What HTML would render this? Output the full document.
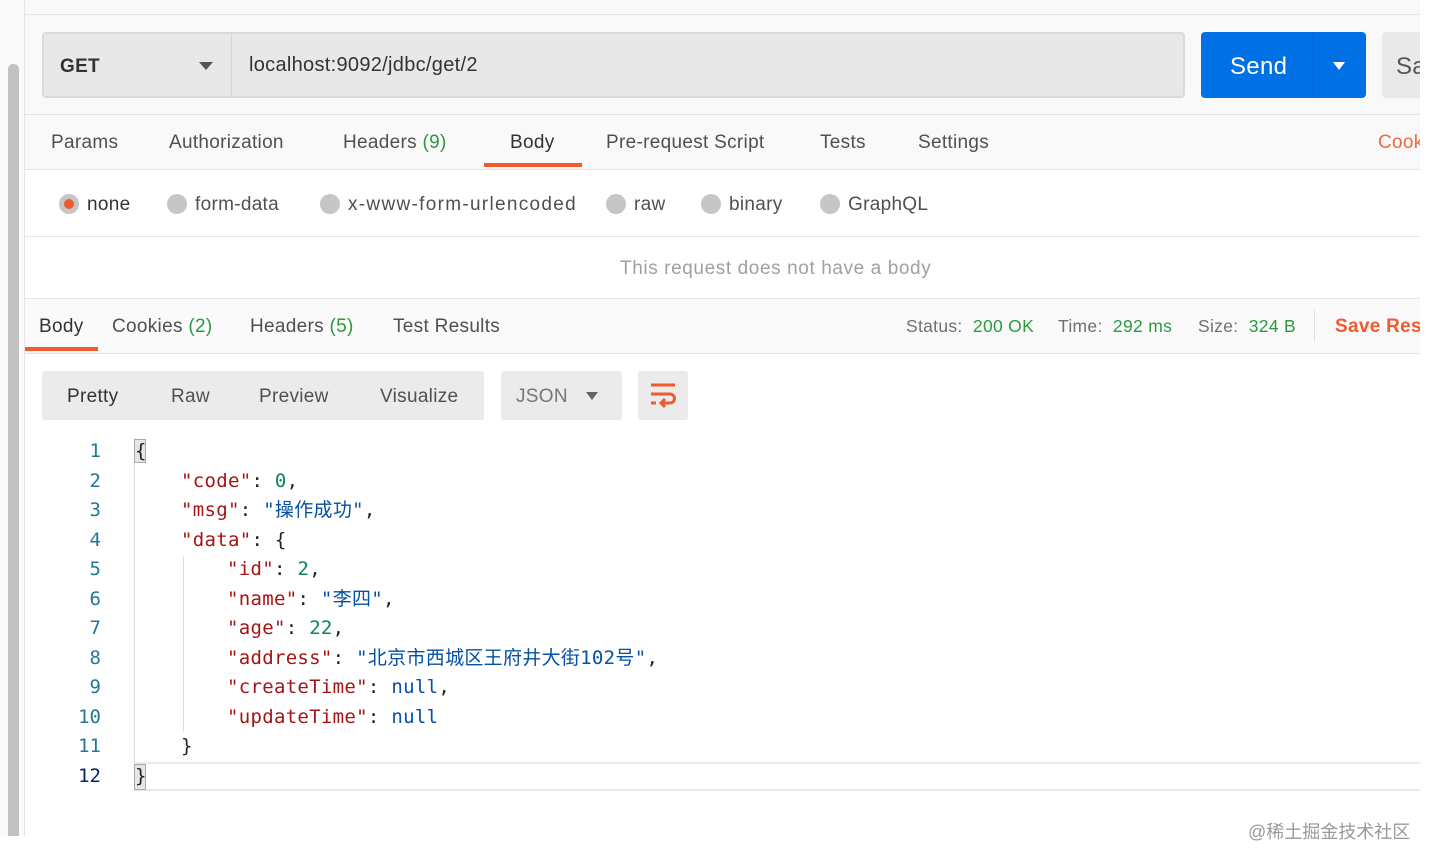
<!DOCTYPE html>
<html><head><meta charset="utf-8"><style>
*{margin:0;padding:0;box-sizing:border-box}
body{width:1432px;height:866px;background:#fff;position:relative;overflow:hidden;font-family:"Liberation Sans","Noto Sans CJK SC",sans-serif;color:#505050}
.a{position:absolute}
.t{position:absolute;font-size:19px;white-space:nowrap;line-height:1;letter-spacing:0.3px}
.g{color:#2b9a3f}
.code{position:absolute;font-family:"DejaVu Sans Mono","Noto Sans CJK SC",monospace;font-size:19px;white-space:pre;line-height:1;letter-spacing:0.3px}
.k{color:#a31515}.s{color:#0451a5}.n{color:#098658}.p{color:#222}
.ln{position:absolute;right:1331px;font-family:"DejaVu Sans Mono",monospace;font-size:19px;color:#237893;line-height:1}
</style></head><body>
<div class="a" style="left:0;top:0;width:25px;height:836px;background:#fafafa"></div>
<div class="a" style="left:8px;top:64px;width:11px;height:772px;background:#c2c2c2;border-radius:5px 5px 0 0"></div>
<div class="a" style="left:24px;top:0;width:1px;height:836px;background:#e4e4e4"></div>
<div class="a" style="left:25px;top:0;width:1395px;height:170px;background:#f9f9f9"></div>
<div class="a" style="left:25px;top:14px;width:1395px;height:1px;background:#e6e6e6"></div>
<div class="a" style="left:42px;top:32px;width:1143px;height:66px;background:#e8e8e8;border:2px solid #dadada;border-radius:4px"></div>
<div class="a" style="left:231px;top:34px;width:1px;height:62px;background:#d6d6d6"></div>
<div class="t" style="left:60px;top:57px;color:#333;font-weight:bold;font-size:19px">GET</div>
<div class="a" style="left:199px;top:62px;border-left:7px solid transparent;border-right:7px solid transparent;border-top:8px solid #555"></div>
<div class="t" style="left:249px;top:55px;color:#333;font-size:20px">localhost:9092/jdbc/get/2</div>
<div class="a" style="left:1201px;top:32px;width:165px;height:66px;background:#0071e4;border-radius:4px"></div>
<div class="a" style="left:1313px;top:32px;width:1px;height:66px;background:#0a63c4"></div>
<div class="t" style="left:1230px;top:55px;color:#fff;font-size:24px">Send</div>
<div class="a" style="left:1333px;top:62px;border-left:6px solid transparent;border-right:6px solid transparent;border-top:8px solid #fff"></div>
<div class="a" style="left:1382px;top:32px;width:38px;height:66px;background:#e9e9e9;border-radius:4px 0 0 4px"></div>
<div class="t" style="left:1396px;top:55px;color:#555;font-size:24px">Sa</div>
<div class="a" style="left:25px;top:114px;width:1395px;height:1px;background:#e4e4e4"></div>
<div class="a" style="left:25px;top:169px;width:1395px;height:1px;background:#e4e4e4"></div>
<div class="t" style="left:51px;top:133px">Params</div>
<div class="t" style="left:169px;top:133px">Authorization</div>
<div class="t" style="left:343px;top:133px">Headers <span class="g">(9)</span></div>
<div class="t" style="left:510px;top:133px;color:#333">Body</div>
<div class="a" style="left:484px;top:163px;width:98px;height:4px;background:#f05a2d"></div>
<div class="t" style="left:606px;top:133px">Pre-request Script</div>
<div class="t" style="left:820px;top:133px">Tests</div>
<div class="t" style="left:918px;top:133px">Settings</div>
<div class="t" style="left:1378px;top:133px;color:#ef6a3d">Cook</div>
<div class="a" style="left:59px;top:194px;width:20px;height:20px;border-radius:50%;background:#c6c6c6"></div>
<div class="a" style="left:64px;top:199px;width:10px;height:10px;border-radius:50%;background:#f05a2d"></div>
<div class="t" style="left:87px;top:195px;color:#333">none</div>
<div class="a" style="left:167px;top:194px;width:20px;height:20px;border-radius:50%;background:#c6c6c6"></div>
<div class="t" style="left:195px;top:195px">form-data</div>
<div class="a" style="left:320px;top:194px;width:20px;height:20px;border-radius:50%;background:#c6c6c6"></div>
<div class="t" style="left:348px;top:195px;letter-spacing:1.3px">x-www-form-urlencoded</div>
<div class="a" style="left:606px;top:194px;width:20px;height:20px;border-radius:50%;background:#c6c6c6"></div>
<div class="t" style="left:634px;top:195px">raw</div>
<div class="a" style="left:701px;top:194px;width:20px;height:20px;border-radius:50%;background:#c6c6c6"></div>
<div class="t" style="left:729px;top:195px">binary</div>
<div class="a" style="left:820px;top:194px;width:20px;height:20px;border-radius:50%;background:#c6c6c6"></div>
<div class="t" style="left:848px;top:195px">GraphQL</div>
<div class="a" style="left:25px;top:236px;width:1395px;height:1px;background:#e6e6e6"></div>
<div class="t" style="left:620px;top:259px;color:#a0a0a0;letter-spacing:0.6px">This request does not have a body</div>
<div class="a" style="left:25px;top:298px;width:1395px;height:56px;background:#fafafa;border-top:1px solid #e4e4e4;border-bottom:1px solid #e4e4e4"></div>
<div class="t" style="left:39px;top:317px;color:#333">Body</div>
<div class="a" style="left:25px;top:347px;width:73px;height:4px;background:#f05a2d"></div>
<div class="t" style="left:112px;top:317px">Cookies <span class="g">(2)</span></div>
<div class="t" style="left:250px;top:317px">Headers <span class="g">(5)</span></div>
<div class="t" style="left:393px;top:317px">Test Results</div>
<div class="t" style="left:906px;top:318px;font-size:17.5px;color:#707070">Status: <span class="g">&nbsp;200 OK</span></div>
<div class="t" style="left:1058px;top:318px;font-size:17.5px;color:#707070">Time: <span class="g">&nbsp;292 ms</span></div>
<div class="t" style="left:1198px;top:318px;font-size:17.5px;color:#707070">Size: <span class="g">&nbsp;324 B</span></div>
<div class="a" style="left:1314px;top:310px;width:1px;height:32px;background:#e0e0e0"></div>
<div class="t" style="left:1335px;top:317px;color:#ef5b2f;font-weight:bold">Save Resp</div>
<div class="a" style="left:42px;top:371px;width:442px;height:49px;background:#ebebeb;border-radius:3px"></div>
<div class="t" style="left:67px;top:387px;color:#333">Pretty</div>
<div class="t" style="left:171px;top:387px">Raw</div>
<div class="t" style="left:259px;top:387px">Preview</div>
<div class="t" style="left:380px;top:387px">Visualize</div>
<div class="a" style="left:501px;top:371px;width:121px;height:49px;background:#ebebeb;border-radius:3px"></div>
<div class="t" style="left:516px;top:387px;color:#777">JSON</div>
<div class="a" style="left:586px;top:392px;border-left:6px solid transparent;border-right:6px solid transparent;border-top:8px solid #666"></div>
<div class="a" style="left:638px;top:371px;width:50px;height:49px;background:#ebebeb;border-radius:3px"></div>
<svg class="a" style="left:649px;top:382px" width="28" height="28" viewBox="0 0 28 28" fill="none" stroke="#f05a2d" stroke-width="3"><path d="M2 3H26M2 12H21a4.5 4.5 0 0 1 0 9H13M16 17l-4 4 4 4M2 21H7"/></svg>
<div class="a" style="left:134px;top:438px;width:1px;height:352px;background:#ddd"></div>
<div class="a" style="left:183px;top:556px;width:1px;height:176px;background:#ddd"></div>
<div class="a" style="left:134px;top:762px;width:1286px;height:29px;border-top:2px solid #eaeaea;border-bottom:2px solid #eaeaea"></div>
<div class="a" style="left:134px;top:439px;width:12px;height:24px;background:#e6e6e6;border:1px solid #aaa"></div>
<div class="a" style="left:134px;top:764px;width:12px;height:26px;background:#e6e6e6;border:1px solid #aaa"></div>
<div class="ln" style="top:442px">1</div>
<div class="ln" style="top:472px">2</div>
<div class="ln" style="top:501px">3</div>
<div class="ln" style="top:531px">4</div>
<div class="ln" style="top:560px">5</div>
<div class="ln" style="top:590px">6</div>
<div class="ln" style="top:619px">7</div>
<div class="ln" style="top:649px">8</div>
<div class="ln" style="top:678px">9</div>
<div class="ln" style="top:708px">10</div>
<div class="ln" style="top:737px">11</div>
<div class="ln" style="top:767px;color:#0b216f">12</div>
<div class="code p" style="left:135px;top:442px">{</div>
<div class="code" style="left:181px;top:472px"><span class="k">"code"</span><span class="p">: </span><span class="n">0</span><span class="p">,</span></div>
<div class="code" style="left:181px;top:501px"><span class="k">"msg"</span><span class="p">: </span><span class="s">"操作成功"</span><span class="p">,</span></div>
<div class="code" style="left:181px;top:531px"><span class="k">"data"</span><span class="p">: {</span></div>
<div class="code" style="left:227px;top:560px"><span class="k">"id"</span><span class="p">: </span><span class="n">2</span><span class="p">,</span></div>
<div class="code" style="left:227px;top:590px"><span class="k">"name"</span><span class="p">: </span><span class="s">"李四"</span><span class="p">,</span></div>
<div class="code" style="left:227px;top:619px"><span class="k">"age"</span><span class="p">: </span><span class="n">22</span><span class="p">,</span></div>
<div class="code" style="left:227px;top:649px"><span class="k">"address"</span><span class="p">: </span><span class="s">"北京市西城区王府井大街102号"</span><span class="p">,</span></div>
<div class="code" style="left:227px;top:678px"><span class="k">"createTime"</span><span class="p">: </span><span class="s">null</span><span class="p">,</span></div>
<div class="code" style="left:227px;top:708px"><span class="k">"updateTime"</span><span class="p">: </span><span class="s">null</span></div>
<div class="code p" style="left:181px;top:737px">}</div>
<div class="code p" style="left:135px;top:767px">}</div>
<div class="a" style="left:1420px;top:0;width:12px;height:866px;background:#fff"></div>
<div class="t" style="left:1248px;top:823px;font-size:18px;color:#999;letter-spacing:0">@稀土掘金技术社区</div>
</body></html>
